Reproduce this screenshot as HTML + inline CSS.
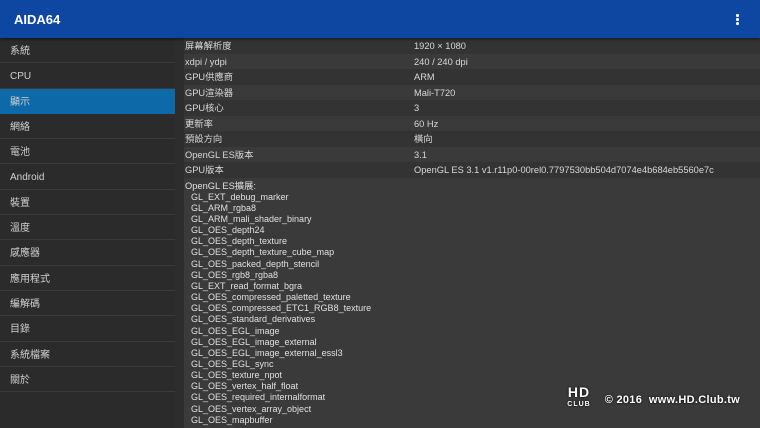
<!DOCTYPE html><html><head><meta charset="utf-8"><style>
*{margin:0;padding:0;box-sizing:border-box}
body{width:760px;height:428px;overflow:hidden;background:#2d2d2d;font-family:"Liberation Sans","Noto Sans CJK TC",sans-serif;color:#d8d8d8;position:relative}
.hdr{position:absolute;left:0;top:0;width:760px;height:38px;background:#0d47a1;box-shadow:0 1px 3px rgba(0,0,0,.6);z-index:2}
.hdr .t{position:absolute;left:14px;top:12px;font-size:13px;font-weight:bold;color:#fff}
.dots{position:absolute;left:736px;top:14px;width:3px}
.dots i{display:block;width:2.5px;height:2.5px;background:#fff;border-radius:50%;margin-bottom:1.5px}
.side{position:absolute;left:0;top:38px;width:175px;height:390px;background:#2b2b2b}
.side div{height:25.3px;line-height:25px;padding-left:10px;padding-top:1px;font-size:10px;border-bottom:1px solid #3a3a3a;color:#d0d0d0}
.side div.sel{background:#0e69a8;border-bottom-color:#0e69a8}
.main{position:absolute;left:184px;top:38px;width:576px;height:390px;background:#3a3a3a}
.row{height:15.5px;line-height:15.5px;font-size:9.3px;position:relative;padding-left:1px;padding-top:1px}
.row:nth-child(odd){background:#333333}
.row span{position:absolute;left:230px;top:1px}
.ext{padding-left:1px;font-size:9.3px;line-height:11.15px;padding-top:3px;color:#e0e0e0}
.ext p{padding-left:6px;font-size:9px}
.wm{position:absolute;left:560px;top:388px;font-size:11px;color:#fff;text-shadow:0 0 2px #000;letter-spacing:.3px;font-weight:bold}
.logo{display:inline-block;width:38px;text-align:center;line-height:9px;vertical-align:-3px}
</style></head><body>
<div class="hdr"><div class="t">AIDA64</div><div class="dots"><i></i><i></i><i></i></div></div>
<div class="side">
<div>系統</div><div>CPU</div><div class="sel">顯示</div><div>網絡</div><div>電池</div><div>Android</div><div>裝置</div><div>溫度</div><div>感應器</div><div>應用程式</div><div>編解碼</div><div>目錄</div><div>系統檔案</div><div>關於</div>
</div>
<div class="main">
<div class="row">屏幕解析度<span>1920 × 1080</span></div>
<div class="row">xdpi / ydpi<span>240 / 240 dpi</span></div>
<div class="row">GPU供應商<span>ARM</span></div>
<div class="row">GPU渲染器<span>Mali-T720</span></div>
<div class="row">GPU核心<span>3</span></div>
<div class="row">更新率<span>60 Hz</span></div>
<div class="row">預設方向<span>橫向</span></div>
<div class="row">OpenGL ES版本<span>3.1</span></div>
<div class="row">GPU版本<span>OpenGL ES 3.1 v1.r11p0-00rel0.7797530bb504d7074e4b684eb5560e7c</span></div>
<div class="ext">OpenGL ES擴展:
<p>GL_EXT_debug_marker</p><p>GL_ARM_rgba8</p><p>GL_ARM_mali_shader_binary</p><p>GL_OES_depth24</p><p>GL_OES_depth_texture</p><p>GL_OES_depth_texture_cube_map</p><p>GL_OES_packed_depth_stencil</p><p>GL_OES_rgb8_rgba8</p><p>GL_EXT_read_format_bgra</p><p>GL_OES_compressed_paletted_texture</p><p>GL_OES_compressed_ETC1_RGB8_texture</p><p>GL_OES_standard_derivatives</p><p>GL_OES_EGL_image</p><p>GL_OES_EGL_image_external</p><p>GL_OES_EGL_image_external_essl3</p><p>GL_OES_EGL_sync</p><p>GL_OES_texture_npot</p><p>GL_OES_vertex_half_float</p><p>GL_OES_required_internalformat</p><p>GL_OES_vertex_array_object</p><p>GL_OES_mapbuffer</p>
</div>
</div>
<div class="wm"><span class="logo"><span style="font-size:14px;letter-spacing:1px">HD</span><br><span style="font-size:7px;letter-spacing:1px">CLUB</span></span> &nbsp;© 2016 &nbsp;www.HD.Club.tw</div>
</body></html>
